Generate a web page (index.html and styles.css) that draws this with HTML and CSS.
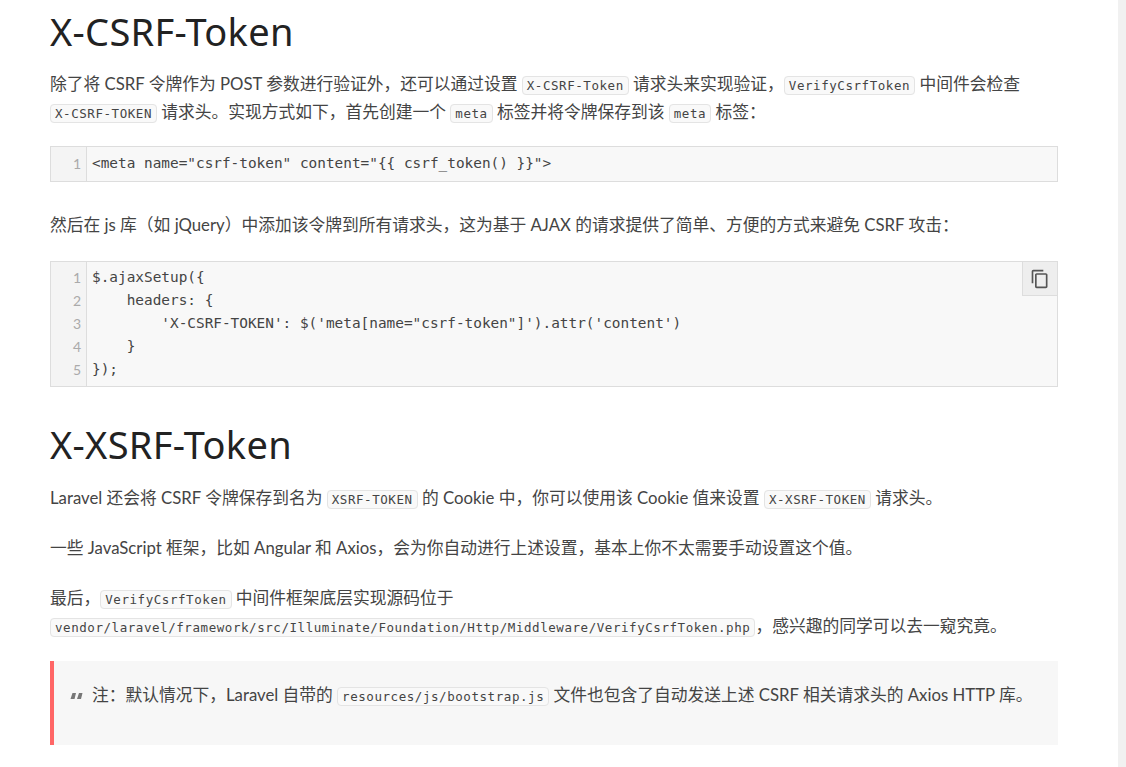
FILE: index.html
```html
<!DOCTYPE html>
<html lang="zh">
<head>
<meta charset="utf-8">
<title>X-CSRF-Token</title>
<link rel="stylesheet" href="styles.css">
</head>
<body>
<div class="page">
<main class="content">
<h2 class="first">X-CSRF-Token</h2>
<p class="before-code">除了将 CSRF 令牌作为 POST 参数进行验证外，还可以通过设置 <code>X-CSRF-Token</code> 请求头来实现验证，<code>VerifyCsrfToken</code> 中间件会检查<br><code>X-CSRF-TOKEN</code> 请求头。实现方式如下，首先创建一个 <code>meta</code> 标签并将令牌保存到该 <code>meta</code> 标签：</p>
<div class="code">
<div class="gutter"><span>1</span></div>
<pre>&lt;meta name="csrf-token" content="{{ csrf_token() }}"&gt;</pre>
</div>
<p>然后在 js 库（如 jQuery）中添加该令牌到所有请求头，这为基于 AJAX 的请求提供了简单、方便的方式来避免 CSRF 攻击：</p>
<div class="code">
<div class="gutter"><span>1</span><span>2</span><span>3</span><span>4</span><span>5</span></div>
<pre>$.ajaxSetup({
    headers: {
        'X-CSRF-TOKEN': $('meta[name="csrf-token"]').attr('content')
    }
});</pre>
<button class="copy" type="button" aria-label="复制">
<svg width="20" height="20" viewBox="0 0 24 24" fill="#555"><path d="M16 1H4c-1.100 0-2 .9-2 2v14h2V3h12V1zm3 4H8c-1.100 0-2 .9-2 2v14c0 1.100.9 2 2 2h11c1.100 0 2-.9 2-2V7c0-1.100-.9-2-2-2zm0 16H8V7h11v14z"/></svg>
</button>
</div>
<h2>X-XSRF-Token</h2>
<p>Laravel 还会将 CSRF 令牌保存到名为 <code>XSRF-TOKEN</code> 的 Cookie 中，你可以使用该 Cookie 值来设置 <code>X-XSRF-TOKEN</code> 请求头。</p>
<p>一些 JavaScript 框架，比如 Angular 和 Axios，会为你自动进行上述设置，基本上你不太需要手动设置这个值。</p>
<p class="before-quote">最后，<code>VerifyCsrfToken</code> 中间件框架底层实现源码位于<br><code>vendor/laravel/framework/src/Illuminate/Foundation/Http/Middleware/VerifyCsrfToken.php</code>，感兴趣的同学可以去一窥究竟。</p>
<blockquote>
<svg class="quote" width="13" height="8" viewBox="0 0 13 8" fill="#777"><path d="M2.500 1H6L4.500 7H0.500zM9 1h3.500L11 7H7z"/></svg>
<span>注：默认情况下，Laravel 自带的 <code>resources/js/bootstrap.js</code> 文件也包含了自动发送上述 CSRF 相关请求头的 Axios HTTP 库。</span>
</blockquote>
</main>
<div class="scrollbar"></div>
</div>
</body>
</html>
```
FILE: styles.css
```css
html, body {
  margin: 0;
  padding: 0;
  background: #fff;
}
body {
  height: 767px;
  overflow: hidden;
  font-family: "Lato", "Noto Sans CJK SC", sans-serif;
  font-size: 16.75px;
  color: #444;
}
.page {
  display: flex;
  justify-content: space-between;
  height: 767px;
}
.content {
  width: 1008px;
  margin-left: 50px;
}
.scrollbar {
  width: 8px;
  background: #f1f1f1;
}
h2 {
  font-family: "Noto Sans", sans-serif;
  font-weight: 400;
  font-size: 38px;
  letter-spacing: 0.3px;
  line-height: 46px;
  color: #222;
  margin: 34px 0 17px;
}
h2.first {
  margin: 8px 0 16px;
}
p {
  margin: 0 0 22px;
  line-height: 28px;
}
p.before-code {
  margin-bottom: 20px;
}
p.before-quote {
  margin-bottom: 21px;
}
code {
  font-family: "DejaVu Sans Mono", monospace;
  font-size: 12.5px;
  letter-spacing: 0.56px;
  line-height: 1;
  color: #444;
  background: #f9f9f9;
  border: 1px solid #e4e4e4;
  border-radius: 4px;
  padding: 1px 4px;
}
.code {
  position: relative;
  display: flex;
  align-items: center;
  min-height: 34px;
  background: #f8f8f8;
  border: 1px solid #ddd;
  margin: 0 0 29px;
}
.gutter {
  display: flex;
  flex-direction: column;
  align-self: stretch;
  justify-content: center;
  width: 36px;
  box-sizing: border-box;
  padding: 4px 5px 5px 0;
  background: #f4f4f4;
  border-right: 1px solid #ddd;
  color: #aaa;
  font-size: 14px;
  line-height: 23px;
  text-align: right;
}
pre {
  margin: 0;
  padding: 4px 5px 5px;
  font-family: "DejaVu Sans Mono", monospace;
  font-size: 14.4px;
  line-height: 23px;
  color: #444;
}
.copy {
  position: absolute;
  top: 0;
  right: 0;
  width: 35px;
  height: 34px;
  padding: 0;
  display: flex;
  align-items: center;
  justify-content: center;
  background: #eee;
  border: 0;
  border-left: 1px solid #ddd;
  border-bottom: 1px solid #ddd;
}
blockquote {
  display: flex;
  align-items: flex-start;
  gap: 9px;
  margin: 0;
  height: 84px;
  box-sizing: border-box;
  padding: 20px 16px 0 16px;
  background: #f7f7f7;
  border-left: 4px solid #f66;
  line-height: 28px;
}
.quote {
  margin-top: 11px;
  flex: none;
}
```
